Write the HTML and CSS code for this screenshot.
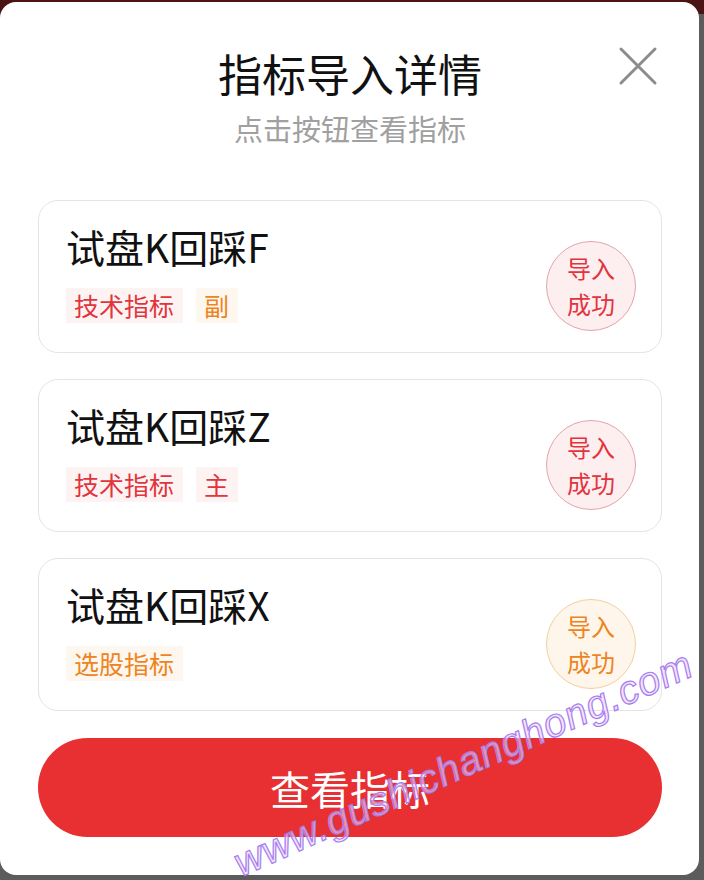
FILE: index.html
```html
<!DOCTYPE html>
<html lang="zh-CN">
<head>
<meta charset="utf-8">
<title>指标导入详情</title>
<link rel="stylesheet" href="styles.css">
</head>
<body>
<div class="modal">
  <button class="close" aria-label="关闭">
    <svg width="40" height="40" viewBox="0 0 40 40"><path d="M3 3 L37 37 M37 3 L3 37" stroke="#8c8c8c" stroke-width="3" stroke-linecap="round" fill="none"/></svg>
  </button>
  <header class="head">
    <h1 class="title">指标导入详情</h1>
    <p class="subtitle">点击按钮查看指标</p>
  </header>
  <div class="list">
    <div class="card">
      <div class="info">
        <div class="name">试盘K回踩F</div>
        <div class="tags">
          <span class="tag red">技术指标</span>
          <span class="tag orange">副</span>
        </div>
      </div>
      <div class="badge red">导入<br>成功</div>
    </div>
    <div class="card">
      <div class="info">
        <div class="name">试盘K回踩Z</div>
        <div class="tags">
          <span class="tag red">技术指标</span>
          <span class="tag red">主</span>
        </div>
      </div>
      <div class="badge red">导入<br>成功</div>
    </div>
    <div class="card">
      <div class="info">
        <div class="name">试盘K回踩X</div>
        <div class="tags">
          <span class="tag orange">选股指标</span>
        </div>
      </div>
      <div class="badge orange">导入<br>成功</div>
    </div>
  </div>
  <button class="primary">查看指标</button>
</div>
<div class="watermark">www.gushichanghong.com</div>
</body>
</html>
```
FILE: styles.css
```css
html, body {
  margin: 0;
  padding: 0;
}
body {
  position: relative;
  width: 704px;
  height: 880px;
  overflow: hidden;
  background: linear-gradient(#4a1414 0, #4a1414 14px, #5c5c5c 14px);
  font-family: "Noto Sans CJK SC", "Noto Sans", sans-serif;
}
.modal {
  position: relative;
  box-sizing: border-box;
  margin-top: 2px;
  width: 699px;
  height: 873px;
  background: #fff;
  border-radius: 16px;
  padding: 0 37px 0 38px;
  display: flex;
  flex-direction: column;
  overflow: hidden;
}
.close {
  position: absolute;
  top: 44px;
  right: 41px;
  width: 40px;
  height: 40px;
  padding: 0;
  border: 0;
  background: none;
}
.close svg { display: block; }
.head {
  display: flex;
  flex-direction: column;
  align-items: center;
  padding-top: 49px;
}
.title {
  margin: 0;
  font-size: 44px;
  line-height: 44px;
  font-weight: 400;
  color: #111;
}
.subtitle {
  margin: 18px 0 0;
  font-size: 29px;
  line-height: 30px;
  color: #a0a0a0;
}
.list {
  margin-top: 57px;
  display: flex;
  flex-direction: column;
  gap: 26px;
}
.card {
  display: flex;
  align-items: center;
  justify-content: space-between;
  height: 153px;
  box-sizing: border-box;
  border: 1px solid #e4e4e4;
  border-radius: 20px;
  padding: 0 25px 0 27px;
}
.info {
  display: flex;
  flex-direction: column;
}
.name {
  font-size: 39px;
  line-height: 38px;
  color: #111;
  margin-top: -3px;
}
.tags {
  display: flex;
  gap: 13px;
  margin-top: 23px;
}
.tag {
  font-size: 25px;
  line-height: 35px;
  height: 35px;
  padding: 0 9px 0 8px;
}
.tag.red {
  color: #e2343c;
  background: #fdf3f3;
}
.tag.orange {
  color: #ee8420;
  background: #fef7ef;
}
.badge {
  width: 90px;
  height: 90px;
  box-sizing: border-box;
  border-radius: 50%;
  display: flex;
  align-items: center;
  justify-content: center;
  text-align: center;
  font-size: 24px;
  line-height: 36px;
  margin-top: 18px;
}
.badge.red {
  color: #e2343c;
  background: #fdeef0;
  border: 1px solid #e2a4ac;
}
.badge.orange {
  color: #ee8420;
  background: #fef6ea;
  border: 1px solid #f2cf9c;
}
.primary {
  margin-top: 27px;
  height: 99px;
  width: 100%;
  border: 0;
  border-radius: 50px;
  background: #e83032;
  color: #fff;
  font-family: "Noto Sans CJK SC", "Noto Sans", sans-serif;
  font-size: 40px;
  line-height: 40px;
}
.watermark {
  position: absolute;
  left: 214px;
  top: 742px;
  width: max-content;
  white-space: nowrap;
  font-family: "Liberation Sans", sans-serif;
  font-style: italic;
  font-size: 40px;
  line-height: 42px;
  letter-spacing: 1px;
  color: rgba(250, 205, 245, 0.6);
  -webkit-text-stroke: 1.2px #a080f0;
  transform: rotate(-24deg);
  pointer-events: none;
}
```
